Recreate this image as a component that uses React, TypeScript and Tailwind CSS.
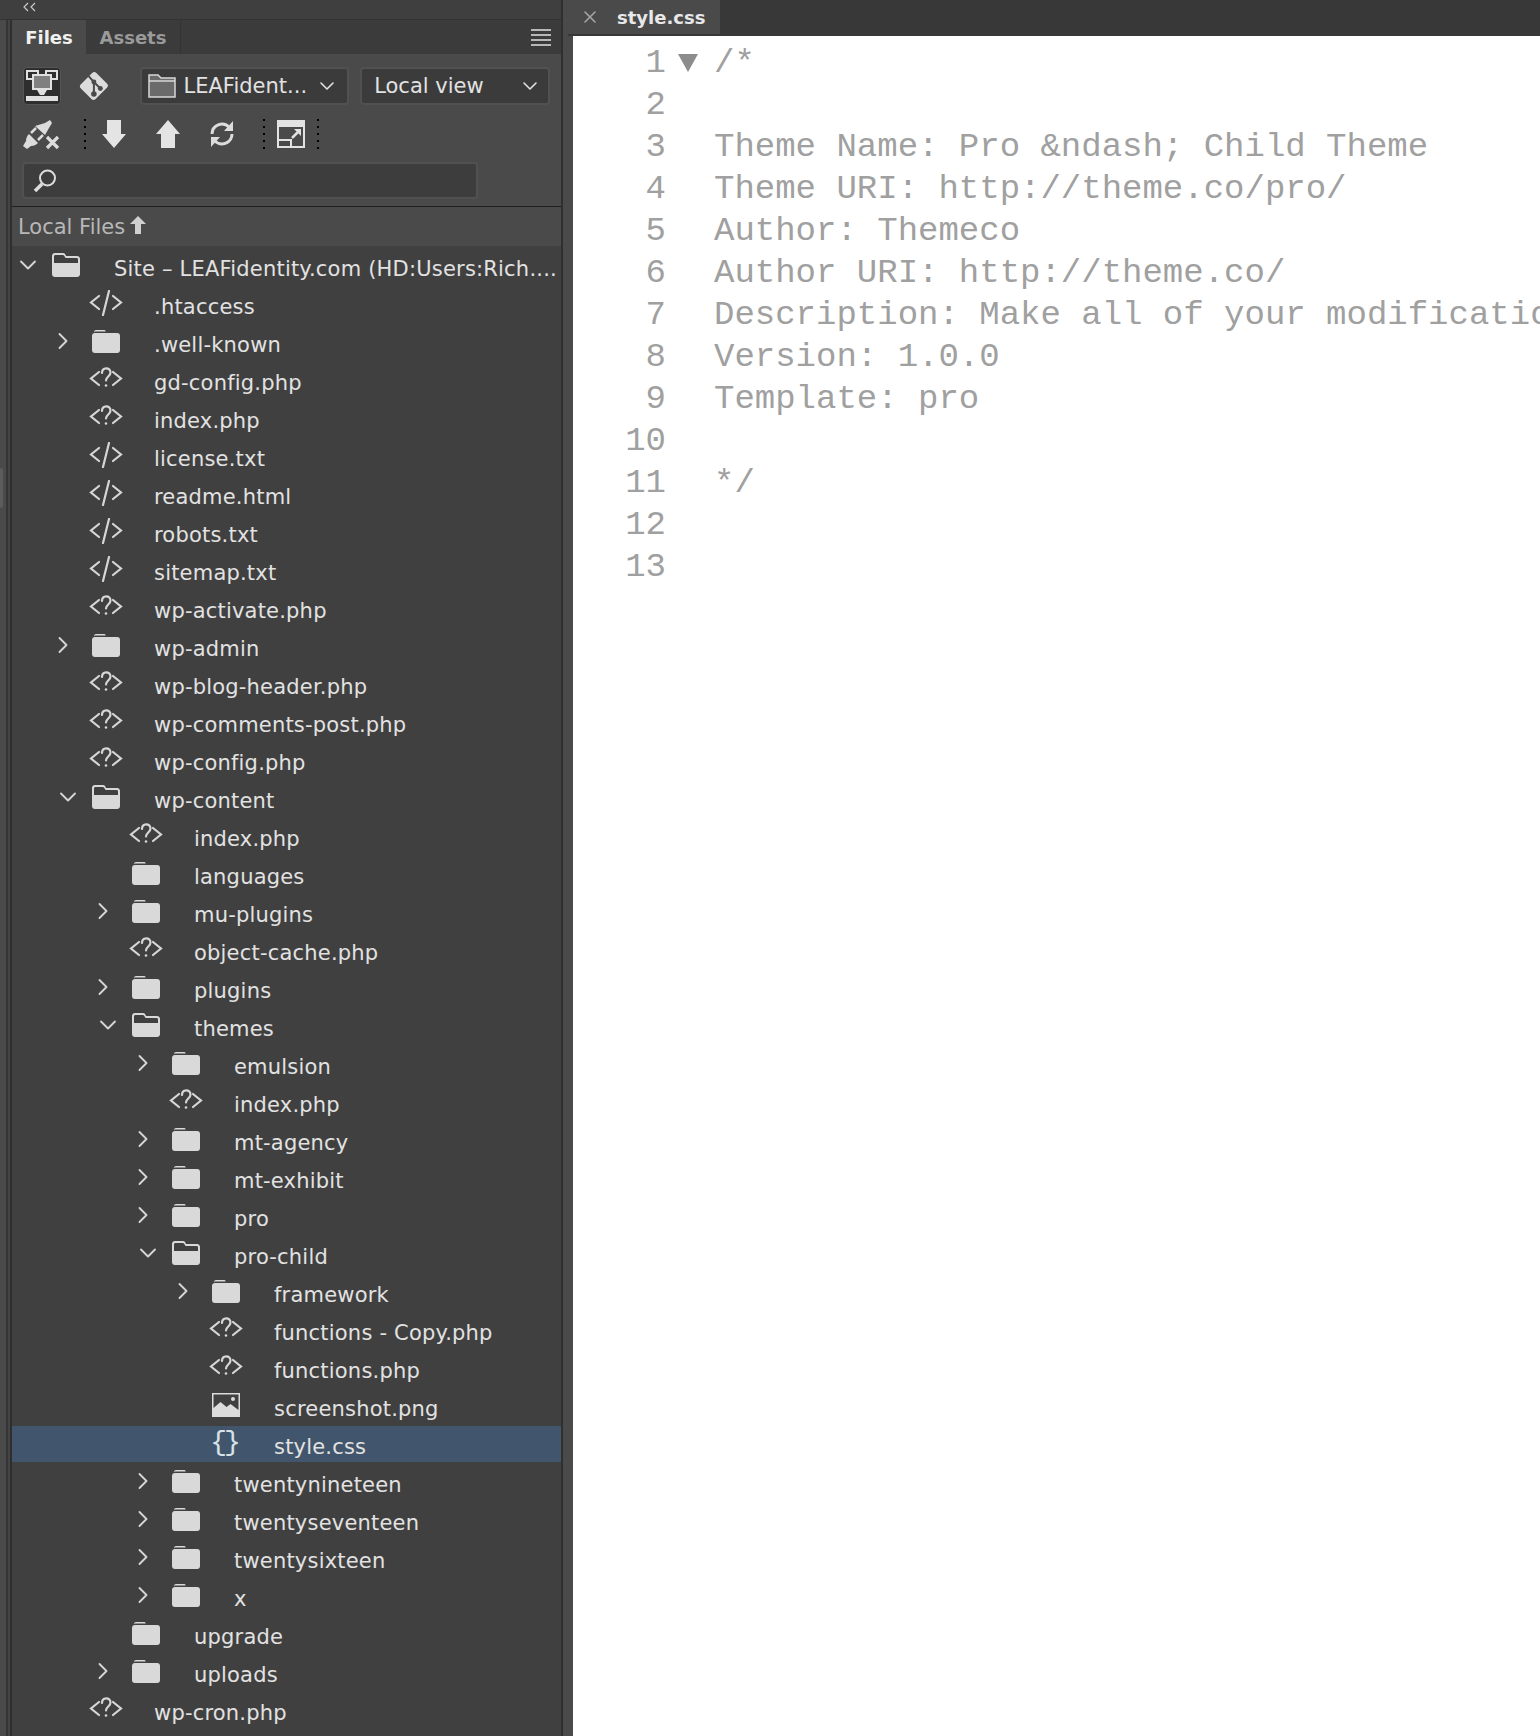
import { ChevronDown, ChevronRight, X } from "lucide-react";

type Kind = "code" | "php" | "folder" | "open" | "image" | "css";

type Row = {
  name: string;
  depth: number;
  kind: Kind;
  arrow?: "right" | "down";
  active?: boolean;
};

const rows: Row[] = [
  { name: "Site – LEAFidentity.com (HD:Users:Rich....", depth: 0, kind: "open", arrow: "down" },
  { name: ".htaccess", depth: 1, kind: "code" },
  { name: ".well-known", depth: 1, kind: "folder", arrow: "right" },
  { name: "gd-config.php", depth: 1, kind: "php" },
  { name: "index.php", depth: 1, kind: "php" },
  { name: "license.txt", depth: 1, kind: "code" },
  { name: "readme.html", depth: 1, kind: "code" },
  { name: "robots.txt", depth: 1, kind: "code" },
  { name: "sitemap.txt", depth: 1, kind: "code" },
  { name: "wp-activate.php", depth: 1, kind: "php" },
  { name: "wp-admin", depth: 1, kind: "folder", arrow: "right" },
  { name: "wp-blog-header.php", depth: 1, kind: "php" },
  { name: "wp-comments-post.php", depth: 1, kind: "php" },
  { name: "wp-config.php", depth: 1, kind: "php" },
  { name: "wp-content", depth: 1, kind: "open", arrow: "down" },
  { name: "index.php", depth: 2, kind: "php" },
  { name: "languages", depth: 2, kind: "folder" },
  { name: "mu-plugins", depth: 2, kind: "folder", arrow: "right" },
  { name: "object-cache.php", depth: 2, kind: "php" },
  { name: "plugins", depth: 2, kind: "folder", arrow: "right" },
  { name: "themes", depth: 2, kind: "open", arrow: "down" },
  { name: "emulsion", depth: 3, kind: "folder", arrow: "right" },
  { name: "index.php", depth: 3, kind: "php" },
  { name: "mt-agency", depth: 3, kind: "folder", arrow: "right" },
  { name: "mt-exhibit", depth: 3, kind: "folder", arrow: "right" },
  { name: "pro", depth: 3, kind: "folder", arrow: "right" },
  { name: "pro-child", depth: 3, kind: "open", arrow: "down" },
  { name: "framework", depth: 4, kind: "folder", arrow: "right" },
  { name: "functions - Copy.php", depth: 4, kind: "php" },
  { name: "functions.php", depth: 4, kind: "php" },
  { name: "screenshot.png", depth: 4, kind: "image" },
  { name: "style.css", depth: 4, kind: "css", active: true },
  { name: "twentynineteen", depth: 3, kind: "folder", arrow: "right" },
  { name: "twentyseventeen", depth: 3, kind: "folder", arrow: "right" },
  { name: "twentysixteen", depth: 3, kind: "folder", arrow: "right" },
  { name: "x", depth: 3, kind: "folder", arrow: "right" },
  { name: "upgrade", depth: 2, kind: "folder" },
  { name: "uploads", depth: 2, kind: "folder", arrow: "right" },
  { name: "wp-cron.php", depth: 1, kind: "php" },
  { name: "", depth: 1, kind: "folder" },
];

const code = [
  "/*",
  "",
  "Theme Name: Pro &ndash; Child Theme",
  "Theme URI: http://theme.co/pro/",
  "Author: Themeco",
  "Author URI: http://theme.co/",
  "Description: Make all of your modifications to Pro in this child theme.",
  "Version: 1.0.0",
  "Template: pro",
  "",
  "*/",
  "",
  "",
];

const indent: Record<number, string> = {
  0: "pl-0",
  1: "pl-[40px]",
  2: "pl-[80px]",
  3: "pl-[120px]",
  4: "pl-[160px]",
};

function FileIcon({ kind }: { kind: Kind }) {
  if (kind === "folder") {
    return (
      <svg width="28" height="24" viewBox="0 0 28 24" className="text-[#d9d9d9]">
        <path d="M2 3.200C2 1.800 3 1 4 1h8c1 0 1.600.7 1.800 1.600H3z" fill="currentColor" />
        <rect x="0" y="4" width="28" height="20" rx="3" fill="currentColor" />
      </svg>
    );
  }
  if (kind === "open") {
    return (
      <svg width="28" height="24" viewBox="0 0 28 24" className="text-[#d9d9d9]">
        <path
          d="M3 0h8c1.600 0 2.400 1 3 3h11c1.700 0 3 1.300 3 3v15c0 1.700-1.300 3-3 3H3c-1.700 0-3-1.300-3-3V3c0-1.700 1.300-3 3-3zM2 9v1h24V6.500C26 5.500 25.400 5 24.500 5H13.500L12.300 3C11.900 2.300 11.500 2 10.800 2H3.500C2.600 2 2 2.600 2 3.500z"
          fill="currentColor"
          fillRule="evenodd"
        />
      </svg>
    );
  }
  if (kind === "image") {
    return (
      <svg width="28" height="24" viewBox="0 0 28 24" className="text-[#dcdcdc]">
        <path d="M0 0h28v24H0zM1.500 1.500V15l7-6 6 5 4-3 8 6V1.500z" fill="currentColor" fillRule="evenodd" />
        <circle cx="21" cy="6" r="2" fill="currentColor" />
      </svg>
    );
  }
  if (kind === "css") {
    return (
      <span className="text-[28px] leading-none text-[#d9e1e8] font-['Liberation_Mono',monospace] tracking-[-3px] -ml-[4px]">
        {"{}"}
      </span>
    );
  }
  return (
    <svg
      width="34"
      height="26"
      viewBox="0 0 34 26"
      fill="none"
      stroke="#d6d6d6"
      strokeWidth="2.200"
      strokeLinecap="round"
      strokeLinejoin="miter"
    >
      <path d="M10 6 2 12.500 10 19" />
      <path d="M24 6l8 6.500L24 19" />
      {kind === "code" ? (
        <path d="M20 1l-6 24" />
      ) : (
        <>
          <path d="M13 7c0-6 8.500-6 8.500-.5 0 4-4.500 4-4.500 8" />
          <circle cx="17" cy="19.500" r="1.300" fill="#d6d6d6" stroke="none" />
        </>
      )}
    </svg>
  );
}

function TreeRow({ row }: { row: Row }) {
  return (
    <div
      className={`flex items-center shrink-0 ${indent[row.depth]} ${
        row.active ? "bg-[#41566c] h-[36px] -mt-[1px] mb-[3px] pt-[4px]" : "h-[38px]"
      }`}
    >
      <div className="w-[36px] shrink-0 flex justify-center pr-[4px] pb-[6px] text-[#d6d6d6]">
        {row.arrow === "down" && <ChevronDown size={28} strokeWidth={1.6} className="shrink-0" />}
        {row.arrow === "right" && (
          <ChevronRight size={28} strokeWidth={1.6} className="shrink-0 -ml-[10px]" />
        )}
      </div>
      <div className="w-[66px] shrink-0 flex pb-[6px]">
        <div className="w-[36px] flex justify-center">
          <FileIcon kind={row.kind} />
        </div>
      </div>
      <span className="mt-[4px] text-[21px] tracking-[0.2px] text-[#e2e2e2] whitespace-nowrap">{row.name}</span>
    </div>
  );
}

function Dots() {
  return (
    <div className="flex flex-col gap-[5px]">
      <div className="w-[2px] h-[2px] bg-black" />
      <div className="w-[2px] h-[2px] bg-black" />
      <div className="w-[2px] h-[2px] bg-black" />
      <div className="w-[2px] h-[2px] bg-black" />
      <div className="w-[2px] h-[2px] bg-black" />
    </div>
  );
}

function Toolbar() {
  return (
    <div className="bg-[#4a4a4a] px-[11px] pt-[14px]">
      <div className="flex items-center h-[36px]">
        <div className="w-[38px] h-[38px] rounded-[4px] bg-[#2e2e2e] border border-[#555] flex items-center justify-center">
          <svg width="32" height="32" viewBox="0 0 32 32">
            <rect x="1" y="1" width="11" height="8" fill="none" stroke="#e0e0e0" strokeWidth="2" />
            <rect x="20" y="1" width="11" height="8" fill="none" stroke="#e0e0e0" strokeWidth="2" />
            <rect x="7" y="5" width="18" height="14" fill="#808080" stroke="#e0e0e0" strokeWidth="2" />
            <path d="M11 20h10l-3 5h-4z" fill="#e0e0e0" />
            <rect x="0" y="26" width="32" height="5" fill="#e0e0e0" />
          </svg>
        </div>
        <svg width="32" height="34" viewBox="0 0 32 34" className="ml-[17px]">
          <rect x="5.500" y="6" width="21" height="22" rx="3" fill="#dcdcdc" transform="rotate(45 16 17)" />
          <path d="M9 5l7 8v11M16 13l6 6" stroke="#4a4a4a" strokeWidth="2" fill="none" />
          <circle cx="16" cy="13" r="2.500" fill="#4a4a4a" />
          <circle cx="16" cy="25" r="2.800" fill="#4a4a4a" />
          <circle cx="22.500" cy="19.500" r="2.500" fill="#4a4a4a" />
        </svg>
        <div className="ml-[30px] w-[211px] h-[38px] rounded-[4px] bg-[#3b3b3b] border-2 border-[#515151] flex items-center pl-[6px] pr-[8px]">
          <svg width="28" height="24" viewBox="0 0 28 24" className="shrink-0">
            <path d="M1 1h9l3 3h14v19H1z" fill="#6a6a6a" stroke="#d8d8d8" strokeWidth="1.500" />
            <path d="M1 7h26" stroke="#d8d8d8" strokeWidth="1.500" />
          </svg>
          <span className="ml-[8px] mt-[2px] text-[21px] text-[#e2e2e2] whitespace-nowrap">LEAFident...</span>
          <ChevronDown size={24} strokeWidth={1.6} className="ml-auto text-[#e2e2e2] shrink-0" />
        </div>
        <div className="ml-[11px] w-[191px] h-[38px] rounded-[4px] bg-[#3b3b3b] border-2 border-[#515151] flex items-center pl-[12px] pr-[6px]">
          <span className="mt-[2px] text-[21px] text-[#e2e2e2] whitespace-nowrap">Local view</span>
          <ChevronDown size={24} strokeWidth={1.6} className="ml-auto text-[#e2e2e2] shrink-0" />
        </div>
      </div>
      <div className="flex items-center h-[34px] mt-[13px]">
        <svg width="40" height="32" viewBox="0 0 40 32" fill="#dcdcdc" className="-ml-[3px]">
          <path d="M15 8l10 9 4-7 3-5-2-3-5 3z" />
          <path d="M3 28l3-5c0-3 1-5 3-7l9 9c-2 2-4 3-7 3l-4 3z" />
          <path d="M11 15l5-5M18 22l5-5" stroke="#dcdcdc" strokeWidth="2.500" />
          <path d="M27 19l11 11M38 19 27 30" stroke="#dcdcdc" strokeWidth="3.200" />
        </svg>
        <div className="ml-[24px]">
          <Dots />
        </div>
        <svg width="24" height="28" viewBox="0 0 24 28" fill="#e4e4e4" className="ml-[16px]">
          <path d="M5 0h14v14h5L12 28 0 14h5z" />
        </svg>
        <svg width="24" height="28" viewBox="0 0 24 28" fill="#e4e4e4" className="ml-[30px]">
          <path d="M12 0 24 14h-5v14H5V14H0z" />
        </svg>
        <svg width="26" height="26" viewBox="0 0 26 26" fill="none" className="ml-[29px]">
          <path d="M3 13a10 10 0 0 1 17-7M23 13a10 10 0 0 1-17 7" stroke="#dcdcdc" strokeWidth="3" />
          <path d="M24 0v10H15zM2 26V16h9z" fill="#dcdcdc" />
        </svg>
        <div className="ml-[28px]">
          <Dots />
        </div>
        <svg width="28" height="28" viewBox="0 0 28 28" className="ml-[12px]">
          <path d="M0 0h28v28H0zM2 7v19h24V7z" fill="#e2e2e2" fillRule="evenodd" />
          <path d="M2 20h12v7" fill="none" stroke="#e2e2e2" strokeWidth="2" />
          <path d="M15 18l7-7" fill="none" stroke="#e2e2e2" strokeWidth="2.500" />
          <path d="M17 9h7v7z" fill="#e2e2e2" />
        </svg>
        <div className="ml-[12px]">
          <Dots />
        </div>
      </div>
      <div className="mt-[11px] -ml-[1px] w-[456px] h-[37px] rounded-[4px] bg-[#3d3d3d] border-2 border-[#515151] flex items-center pl-[8px]">
        <svg width="26" height="26" viewBox="0 0 26 26" fill="none" stroke="#dcdcdc">
          <circle cx="15.500" cy="10" r="7.500" strokeWidth="2" />
          <path d="M10 16 3 23" strokeWidth="3.500" />
        </svg>
      </div>
    </div>
  );
}

export default function App() {
  return (
    <div className="flex w-[1540px] h-[1736px] overflow-hidden bg-[#333] font-['DejaVu_Sans',sans-serif]">
      <div className="w-[12px] shrink-0 flex">
        <div className="w-[6px] bg-[#4a4a4a] pt-[468px]">
          <div className="w-[3px] h-[40px] bg-[#5c5c5c] rounded-r-[2px]" />
        </div>
        <div className="w-[2px] bg-[#353535]" />
        <div className="w-[2px] bg-[#444]" />
        <div className="w-[2px] bg-[#2f2f2f]" />
      </div>

      {/* files panel */}
      <div className="w-[551px] shrink-0 flex flex-col bg-[#4a4a4a] border-r-2 border-[#2f2f2f]">
        <div className="h-[20px] shrink-0 bg-[#3f3f3f] -ml-[12px] flex items-center pl-[22px] border-b border-[#333]">
          <svg width="14" height="10" viewBox="0 0 14 10" fill="none" stroke="#c8c8c8" strokeWidth="1.200" className="mb-[6px]">
            <path d="M6 1 2 5l4 4M13 1 9 5l4 4" />
          </svg>
        </div>
        <div className="h-[34px] shrink-0 flex bg-[#3b3b3b]">
          <div className="w-[74px] bg-[#4a4a4a] flex items-center justify-center text-[18px] font-bold text-[#f0f0f0]">
            Files
          </div>
          <div className="w-[95px] border-r border-[#333] flex items-center justify-center text-[18px] font-bold text-[#9a9a9a]">
            Assets
          </div>
          <div className="ml-auto flex flex-col gap-[3px] justify-center pr-[10px]">
            <div className="w-[20px] h-[2px] bg-[#b8b8b8]" />
            <div className="w-[20px] h-[2px] bg-[#b8b8b8]" />
            <div className="w-[20px] h-[2px] bg-[#b8b8b8]" />
            <div className="w-[20px] h-[2px] bg-[#b8b8b8]" />
          </div>
        </div>
        <Toolbar />
        <div className="mt-[7px] h-[40px] shrink-0 border-t border-[#1f1f1f] flex items-center pl-[6px] pt-[2px] text-[#b8b8b8] text-[21px]">
          Local Files
          <svg width="16" height="18" viewBox="0 0 16 18" fill="#d0d0d0" className="ml-[5px] mb-[6px]">
            <path d="M8 0 16 8h-5v10H5V8H0z" />
          </svg>
        </div>
        <div className="flex-1 flex flex-col bg-[#404040] min-h-0 overflow-hidden pt-[3px]">
          {rows.map((row, i) => (
            <TreeRow key={i} row={row} />
          ))}
        </div>
      </div>

      <div className="w-[10px] shrink-0 bg-[#4a4a4a]" />

      {/* editor */}
      <div className="flex-1 min-w-0 flex flex-col -ml-[5px]">
        <div className="h-[36px] shrink-0 bg-[#383838] flex">
          <div className="w-[152px] h-[34px] bg-[#4a4a4a] flex items-center pl-[12px] text-[#e8e8e8]">
            <X size={20} strokeWidth={1.8} className="text-[#a8a8a8]" />
            <span className="ml-[17px] text-[18px] font-bold">style.css</span>
          </div>
        </div>
        <div className="flex-1 min-h-0 flex ml-[5px] bg-white pt-[6px] overflow-hidden font-['Liberation_Mono',monospace] text-[#a0a0a0] text-[34px] leading-[42px]">
          <div className="w-[93px] shrink-0 text-right">
            {code.map((_, i) => (
              <div key={i} className="h-[42px]">
                {i + 1}
              </div>
            ))}
          </div>
          <div className="w-[48px] shrink-0 flex justify-center pt-[12px]">
            <div className="w-0 h-0 -ml-[5px] border-l-[10px] border-r-[10px] border-t-[18px] border-l-transparent border-r-transparent border-t-[#8c8c8c]" />
          </div>
          <div className="min-w-0 flex-1 overflow-hidden">
            {code.map((line, i) => (
              <div key={i} className="h-[42px] whitespace-pre">
                {line}
              </div>
            ))}
          </div>
        </div>
      </div>
    </div>
  );
}
